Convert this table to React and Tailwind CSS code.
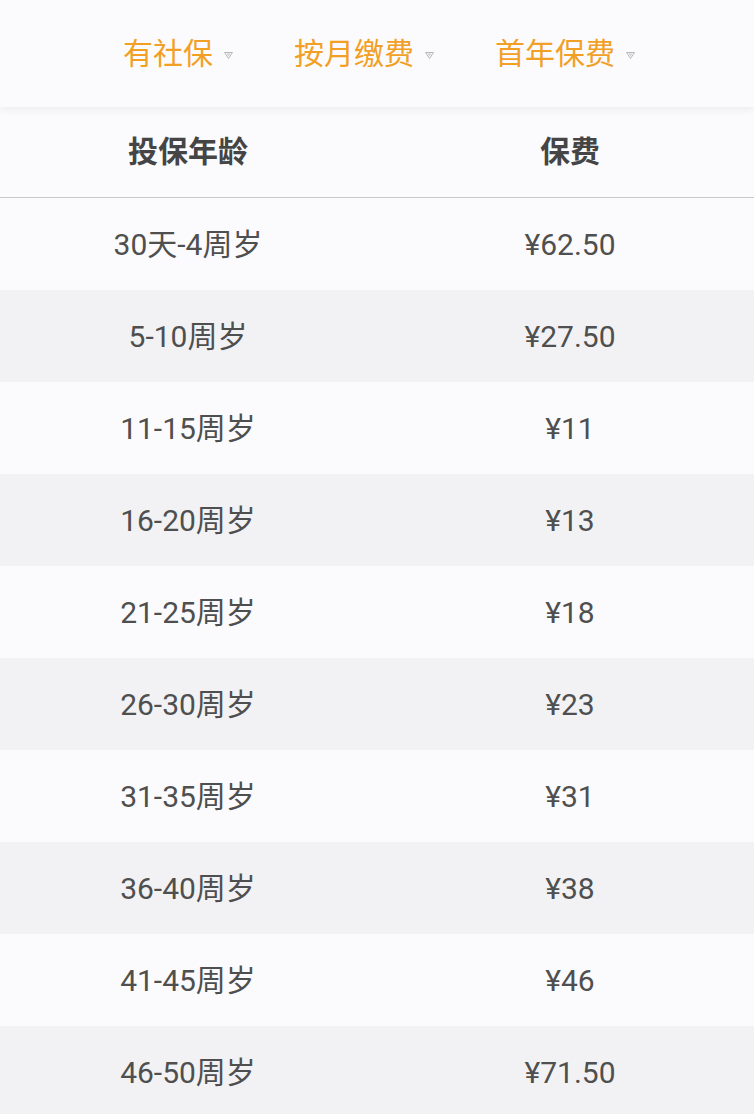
import React from "react";

const rows = [
  ["30天-4周岁", "¥62.50"],
  ["5-10周岁", "¥27.50"],
  ["11-15周岁", "¥11"],
  ["16-20周岁", "¥13"],
  ["21-25周岁", "¥18"],
  ["26-30周岁", "¥23"],
  ["31-35周岁", "¥31"],
  ["36-40周岁", "¥38"],
  ["41-45周岁", "¥46"],
  ["46-50周岁", "¥71.50"],
];

const font = { fontFamily: 'Roboto, "Noto Sans CJK SC", sans-serif' };

function Tri() {
  return (
    <svg width="9" height="7" viewBox="0 0 9 7" className="ml-[11px] mt-[2px]">
      <path d="M0.5 0.5 H8.5 L4.5 6.5 Z" fill="none" stroke="#b8b8b8" strokeWidth="1" />
      <path d="M2.5 1.5 H6.5 L4.5 4.5 Z" fill="#d0d0d0" />
    </svg>
  );
}

function Filter({ label }) {
  return (
    <div className="flex items-center">
      <span className="text-[30px] leading-none text-[#f2a025]">{label}</span>
      <Tri />
    </div>
  );
}

export default function App() {
  return (
    <div className="w-[754px] h-[1114px] overflow-hidden bg-[#fbfbfd]" style={font}>
      <div className="relative z-10 h-[107px] bg-[#fbfbfd] shadow-[0_3px_8px_rgba(0,0,0,0.06)] flex items-center pl-[123px] gap-[61px] pt-[1px]">
        <Filter label="有社保" />
        <Filter label="按月缴费" />
        <Filter label="首年保费" />
      </div>
      <div className="grid grid-cols-[376px_1fr] h-[91px] items-center border-b border-[#c9c9cb] bg-[#fbfbfd]">
        <div className="text-center text-[30px] font-bold text-[#454545] leading-none">投保年龄</div>
        <div className="text-center text-[30px] font-bold text-[#454545] leading-none pl-[10px]">保费</div>
      </div>
      {rows.map(([a, b], i) => (
        <div
          key={i}
          className={`grid grid-cols-[376px_1fr] h-[92px] items-center ${i % 2 === 1 ? "bg-[#f2f2f4]" : "bg-[#fbfbfd]"}`}
        >
          <div className="text-center text-[30px] text-[#4f4f4f] leading-none pt-[1px]">{a}</div>
          <div className="text-center text-[30px] text-[#4f4f4f] leading-none pl-[10px] pt-[1px]">{b}</div>
        </div>
      ))}
    </div>
  );
}
